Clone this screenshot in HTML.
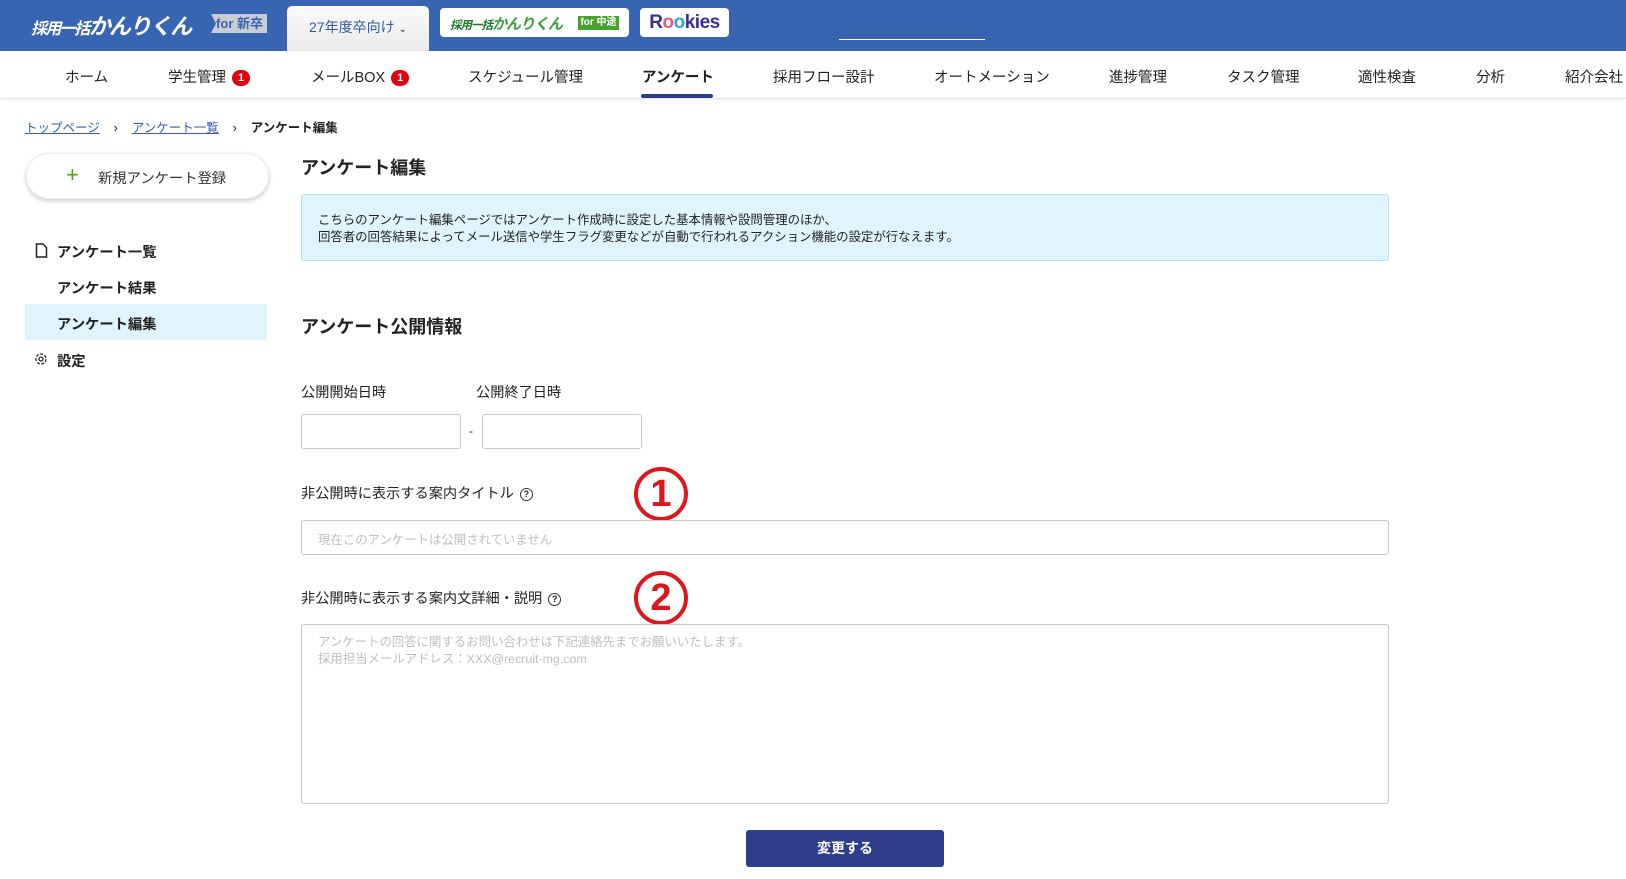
<!DOCTYPE html>
<html><head><meta charset="utf-8"><style>
*{box-sizing:border-box;margin:0;padding:0}
body{width:1626px;height:879px;overflow:hidden;background:#fff;font-family:"Liberation Sans","Noto Sans CJK JP",sans-serif;color:#222;position:relative}
.a{position:absolute;white-space:nowrap}
.hdr{left:0;top:0;width:1626px;height:51px;background:#3865b1}
.nav{left:0;top:51px;width:1626px;height:48px;background:#fff;border-bottom:1px solid #e6e6e6;box-shadow:0 1px 2px rgba(0,0,0,.06)}
.ni{top:66px;font-size:14.5px;color:#222}
.badge{display:inline-block;width:18px;height:16px;border-radius:8px;background:#e00010;color:#fff;font-size:11px;font-weight:bold;text-align:center;line-height:16px;vertical-align:1px;margin-left:6px}
.bc{top:117px;font-size:12.5px}
.bc a{color:#3a5ab0;text-decoration:underline}
.sb{font-size:14.3px;font-weight:bold;color:#222}
.lbl{font-size:14.2px;color:#222}
.inp{border:1px solid #c8c8c8;border-radius:3px;background:#fff}
.circ{width:54px;height:54px;border:4px solid #e0161e;border-radius:50%;color:#e0161e;font-weight:bold;font-size:38px;text-align:center;line-height:46px}
.q{display:inline-block;width:13px;height:13px;border:1.3px solid #333;border-radius:50%;font-size:9px;line-height:10px;text-align:center;font-weight:bold;vertical-align:1px;margin-left:6px}
</style></head><body>
<div class="a hdr"></div>
<div class="a" style="left:31px;top:9px;font-size:22px;font-weight:bold;font-style:italic;color:#fff;letter-spacing:-1.6px"><span style="font-size:16px">採用一括</span>かんりくん</div>
<div class="a" style="left:211px;top:14px;width:56px;height:19px;background:#c9ccd3;color:#3865b1;font-size:13px;font-weight:bold;line-height:19px;text-align:right;padding-right:4px;clip-path:polygon(0 0,100% 0,100% 100%,0 100%,5px 50%)">for 新卒</div>
<div class="a" style="left:287px;top:6px;width:142px;height:45px;background:linear-gradient(#fafafa,#eaeaea);border-radius:5px 5px 0 0"></div>
<div class="a" style="left:309px;top:17px;font-size:14px;color:#2f5aa6">27年度卒向け <span style="font-size:10px;color:#333">⌄</span></div>
<div class="a" style="left:440px;top:8px;width:189px;height:29px;background:#fff;border-radius:4px"></div>
<div class="a" style="left:450px;top:13px;font-size:15px;font-weight:bold;font-style:italic;color:#1a7a2e;letter-spacing:-1px"><span style="font-size:11.5px">採用一括</span><span style="color:#3aa23a">かんりくん</span></div>
<div class="a" style="left:578px;top:16px;width:41px;height:14px;background:#4aa22e;color:#fff;font-size:10px;font-weight:bold;line-height:14px;text-align:center">for 中途</div>
<div class="a" style="left:640px;top:8px;width:89px;height:29px;background:#fff;border-radius:4px;text-align:center;font-size:19px;font-weight:bold;color:#3b2d9a;line-height:29px;letter-spacing:-.5px">R<span style="color:#e05a7a">o</span><span style="color:#27a7d8">o</span>kies</div>
<div class="a" style="left:839px;top:39px;width:146px;height:1px;background:#fff"></div>

<div class="a nav"></div>
<div class="a ni" style="left:65px">ホーム</div>
<div class="a ni" style="left:168px">学生管理<span class="badge">1</span></div>
<div class="a ni" style="left:311px">メールBOX<span class="badge">1</span></div>
<div class="a ni" style="left:468px">スケジュール管理</div>
<div class="a ni" style="left:642px;font-weight:bold">アンケート</div>
<div class="a" style="left:641px;top:94px;width:72px;height:4px;background:#2c3e86;border-radius:2px"></div>
<div class="a ni" style="left:773px">採用フロー設計</div>
<div class="a ni" style="left:934px">オートメーション</div>
<div class="a ni" style="left:1109px">進捗管理</div>
<div class="a ni" style="left:1227px">タスク管理</div>
<div class="a ni" style="left:1358px">適性検査</div>
<div class="a ni" style="left:1476px">分析</div>
<div class="a ni" style="left:1565px">紹介会社</div>

<div class="a bc" style="left:25px"><a>トップページ</a>&nbsp;&nbsp;&nbsp;&nbsp;›&nbsp;&nbsp;&nbsp;&nbsp;<a>アンケート一覧</a>&nbsp;&nbsp;&nbsp;&nbsp;›&nbsp;&nbsp;&nbsp;&nbsp;<b>アンケート編集</b></div>

<div class="a" style="left:26px;top:153px;width:243px;height:46px;border-radius:23px;background:#fff;box-shadow:0 2px 5px rgba(0,0,0,.2);border:1px solid #eee"></div>
<div class="a" style="left:66px;top:164px;font-size:22px;color:#5a9e1e;line-height:22px">+</div>
<div class="a" style="left:98px;top:167px;font-size:14.3px;color:#333">新規アンケート登録</div>

<div class="a" style="left:25px;top:304px;width:242px;height:36px;background:#e0f4fb"></div>
<svg class="a" style="left:35px;top:243px" width="13" height="15" viewBox="0 0 13 15"><path d="M1.5 1h6.5l3.5 3.5v9.5h-10z" fill="none" stroke="#222" stroke-width="1.5"/></svg>
<div class="a sb" style="left:57px;top:241px">アンケート一覧</div>
<div class="a sb" style="left:57px;top:277px">アンケート結果</div>
<div class="a sb" style="left:57px;top:313px">アンケート編集</div>
<svg class="a" style="left:34px;top:352px" width="14" height="14" viewBox="0 0 14 14"><circle cx="7" cy="7" r="2" fill="none" stroke="#222" stroke-width="1.3"/><circle cx="7" cy="7" r="5" fill="none" stroke="#222" stroke-width="1.3" stroke-dasharray="3 1.5"/></svg>
<div class="a sb" style="left:57px;top:350px">設定</div>

<div class="a" style="left:301px;top:154px;font-size:18px;font-weight:bold">アンケート編集</div>
<div class="a" style="left:301px;top:194px;width:1088px;height:67px;background:#e0f4fb;border:1px solid #b5e1f3;border-radius:3px"></div>
<div class="a" style="left:318px;top:212px;font-size:12.4px;line-height:16.5px;color:#222">こちらのアンケート編集ページではアンケート作成時に設定した基本情報や設問管理のほか、<br>回答者の回答結果によってメール送信や学生フラグ変更などが自動で行われるアクション機能の設定が行なえます。</div>

<div class="a" style="left:301px;top:313px;font-size:18px;font-weight:bold">アンケート公開情報</div>
<div class="a lbl" style="left:301px;top:382px">公開開始日時</div>
<div class="a lbl" style="left:476px;top:382px">公開終了日時</div>
<div class="a inp" style="left:301px;top:414px;width:160px;height:35px"></div>
<div class="a" style="left:469px;top:424px;font-size:12px">-</div>
<div class="a inp" style="left:482px;top:414px;width:160px;height:35px"></div>

<div class="a lbl" style="left:301px;top:483px">非公開時に表示する案内タイトル<span class="q">?</span></div>
<div class="a circ" style="left:634px;top:467px">1</div>
<div class="a inp" style="left:301px;top:520px;width:1088px;height:35px"></div>
<div class="a" style="left:318px;top:530px;font-size:12.4px;color:#c0c0c0">現在このアンケートは公開されていません</div>

<div class="a lbl" style="left:301px;top:588px">非公開時に表示する案内文詳細・説明<span class="q">?</span></div>
<div class="a circ" style="left:634px;top:571px">2</div>
<div class="a inp" style="left:301px;top:624px;width:1088px;height:180px"></div>
<div class="a" style="left:318px;top:634px;font-size:12.4px;line-height:17px;color:#c0c0c0">アンケートの回答に関するお問い合わせは下記連絡先までお願いいたします。<br>採用担当メールアドレス：XXX@recruit-mg.com</div>

<div class="a" style="left:746px;top:830px;width:198px;height:37px;background:#2e3e8c;border-radius:3px;color:#fff;font-size:14px;font-weight:bold;text-align:center;line-height:37px">変更する</div>
</body></html>
